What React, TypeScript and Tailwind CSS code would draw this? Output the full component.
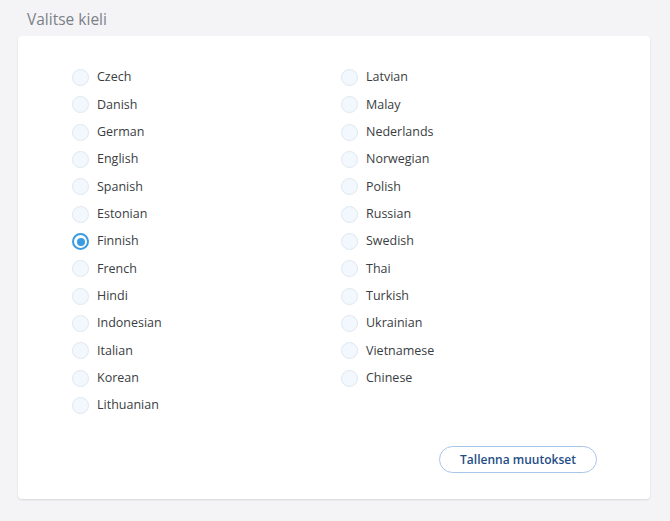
import { useState } from 'react';

const left = ['Czech', 'Danish', 'German', 'English', 'Spanish', 'Estonian', 'Finnish', 'French', 'Hindi', 'Indonesian', 'Italian', 'Korean', 'Lithuanian'];
const right = ['Latvian', 'Malay', 'Nederlands', 'Norwegian', 'Polish', 'Russian', 'Swedish', 'Thai', 'Turkish', 'Ukrainian', 'Vietnamese', 'Chinese'];

function Radio({ label, checked, onSelect }: { label: string; checked: boolean; onSelect: () => void }) {
  return (
    <button onClick={onSelect} className="flex h-[27.33px] items-center gap-[8px] text-left">
      {checked ? (
        <span className="flex h-[17px] w-[17px] items-center justify-center rounded-full border-2 border-[#3b9be2] bg-white">
          <span className="h-[8px] w-[8px] rounded-full bg-[#3b9be2]" />
        </span>
      ) : (
        <span className="h-[17px] w-[17px] rounded-full border border-[#dfe7ef] bg-[#f2f8fe]" />
      )}
      <span className="text-[12.5px] text-[#3a3d42]">{label}</span>
    </button>
  );
}

export default function App() {
  const [lang, setLang] = useState('Finnish');

  return (
    <div className="min-h-[521px] bg-[#f4f4f6] pl-[18px] pr-[20px] pt-[9px] pb-[22px]" style={{ fontFamily: '"Open Sans", sans-serif' }}>
      <h1 className="pl-[9px] text-[15.5px] leading-[20px] text-[#7b8088]">Valitse kieli</h1>
      <div className="mt-[7px] rounded-[4px] bg-white pl-[54px] pr-[53px] pt-[28px] pb-[26px] shadow-[0_1px_2px_rgba(0,0,0,0.12)]">
        <div className="flex">
          <div className="flex w-[269px] shrink-0 flex-col">
            {left.map((l) => (
              <Radio key={l} label={l} checked={lang === l} onSelect={() => setLang(l)} />
            ))}
          </div>
          <div className="flex w-[240px] shrink-0 flex-col">
            {right.map((l) => (
              <Radio key={l} label={l} checked={lang === l} onSelect={() => setLang(l)} />
            ))}
          </div>
        </div>
        <div className="mt-[27px] flex justify-end">
          <button className="h-[27px] w-[158px] rounded-full border border-[#a8c5ea] text-[12px] font-semibold text-[#1e4d87]">
            Tallenna muutokset
          </button>
        </div>
      </div>
    </div>
  );
}
